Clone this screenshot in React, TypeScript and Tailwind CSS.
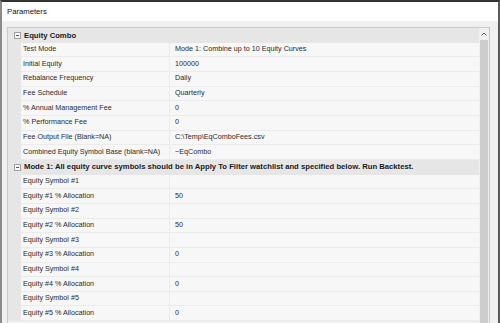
import React from "react";

type Row = { name: string; value: string };

const comboRows: Row[] = [
	{ name: "Test Mode", value: "Mode 1: Combine up to 10 Equity Curves" },
	{ name: "Initial Equity", value: "100000" },
	{ name: "Rebalance Frequency", value: "Daily" },
	{ name: "Fee Schedule", value: "Quarterly" },
	{ name: "% Annual Management Fee", value: "0" },
	{ name: "% Performance Fee", value: "0" },
	{ name: "Fee Output File (Blank=NA)", value: "C:\\Temp\\EqComboFees.csv" },
	{ name: "Combined Equity Symbol Base (blank=NA)", value: "~EqCombo" },
];

const modeRows: Row[] = [
	{ name: "Equity Symbol #1", value: "" },
	{ name: "Equity #1 % Allocation", value: "50" },
	{ name: "Equity Symbol #2", value: "" },
	{ name: "Equity #2 % Allocation", value: "50" },
	{ name: "Equity Symbol #3", value: "" },
	{ name: "Equity #3 % Allocation", value: "0" },
	{ name: "Equity Symbol #4", value: "" },
	{ name: "Equity #4 % Allocation", value: "0" },
	{ name: "Equity Symbol #5", value: "" },
	{ name: "Equity #5 % Allocation", value: "0" },
];

const Category = ({ title }: { title: string }) => (
	<div className="flex h-[14.67px] items-center bg-[#e6e6e6]">
		<div className="ml-[6px] mr-[3px] flex h-[7px] w-[7px] items-center justify-center border border-[#a0a0a0] bg-[#fafafa]">
			<div className="h-px w-[3px] bg-[#555]" />
		</div>
		<span className="whitespace-nowrap text-[7.7px] font-bold text-[#1a1a1a]">{title}</span>
	</div>
);

const PropRow = ({ row }: { row: Row }) => (
	<div className="flex h-[14.67px]">
		<div className="w-[13px] shrink-0 bg-[#e6e6e6]" />
		<div className="flex w-[149px] shrink-0 items-center border-b border-r border-[#ebebeb] bg-[#f7f7f7] pl-[2px]">
			<span className="whitespace-nowrap text-[7.2px] text-[#2a2a2a]">{row.name}</span>
		</div>
		<div className="flex flex-1 items-center border-b border-[#ebebeb] bg-[#f7f7f7] pl-[5px]">
			<span className="whitespace-nowrap text-[7.2px] text-[#2a2a2a]">{row.value}</span>
		</div>
	</div>
);

const App = () => {
	return (
		<div
			className="flex h-[323px] w-[500px] flex-col overflow-hidden border-l-2 border-r-2 border-t-2 border-l-[#8a8a8a] border-r-[#5a5a5a] border-t-[#333] bg-[#f0f0f0]"
			style={{ fontFamily: '"Liberation Sans", Arial, sans-serif' }}
		>
			<div className="flex h-[19px] shrink-0 items-center bg-white pl-[5px]">
				<span className="text-[7.7px] text-[#111]">Parameters</span>
			</div>
			<div className="flex flex-1 pl-[5px] pr-[8px] pt-[6px]">
				<div className="flex flex-1 border-l border-t border-r border-[#c8c8c8]">
					<div className="flex flex-1 flex-col">
						<Category title="Equity Combo" />
						{comboRows.map(r => (
							<PropRow key={r.name} row={r} />
						))}
						<Category title="Mode 1: All equity curve symbols should be in Apply To Filter watchlist and specified below. Run Backtest." />
						{modeRows.map(r => (
							<PropRow key={r.name} row={r} />
						))}
					</div>
					<div className="flex w-[10px] flex-col bg-[#f0f0f0]">
						<div className="flex h-[12px] items-center justify-center">
							<svg width="6" height="4" viewBox="0 0 6 4">
								<path d="M0.5 3.5 L3 1 L5.5 3.5" fill="none" stroke="#606060" strokeWidth="1" />
							</svg>
						</div>
						<div className="mx-[1px] flex-1 bg-[#cdcdcd]" />
					</div>
				</div>
			</div>
		</div>
	);
};

export default App;
